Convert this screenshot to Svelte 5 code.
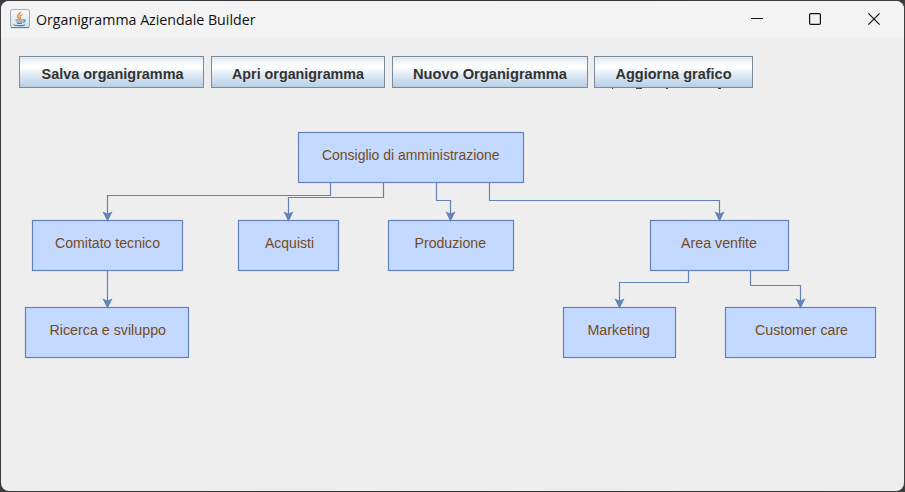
<script>
  const buttons = [
    { label: 'Salva organigramma', width: 185, text: 142, nudge: 1 },
    { label: 'Apri organigramma', width: 174, text: 132, nudge: 0 },
    { label: 'Nuovo Organigramma', width: 196, text: 154, nudge: 0 },
    { label: 'Aggiorna grafico', width: 159, text: 116, nudge: 0 }
  ];
  const nodes = [
    { label: 'Consiglio di amministrazione', x: 298, y: 132, w: 225, tx: 322, tw: 177.5 },
    { label: 'Comitato tecnico', x: 32, y: 220, w: 150, tx: 55, tw: 105 },
    { label: 'Acquisti', x: 238, y: 220, w: 100, tx: 265, tw: 49 },
    { label: 'Produzione', x: 388, y: 220, w: 125, tx: 414.5, tw: 71.5 },
    { label: 'Area venfite', x: 650, y: 220, w: 138, tx: 681, tw: 76 },
    { label: 'Ricerca e sviluppo', x: 25, y: 307, w: 163, tx: 49.5, tw: 116.5 },
    { label: 'Marketing', x: 563, y: 307, w: 112, tx: 587.5, tw: 62.5 },
    { label: 'Customer care', x: 725, y: 307, w: 150, tx: 755, tw: 93 }
  ];
  const edges = [
    { x1: 330, y1: 182, mid: 195, x2: 107, y2: 220 },
    { x1: 383, y1: 182, mid: 197, x2: 288, y2: 220 },
    { x1: 436, y1: 182, mid: 200, x2: 450, y2: 220 },
    { x1: 489, y1: 182, mid: 200, x2: 719, y2: 220 },
    { x1: 107, y1: 270, mid: 288, x2: 107, y2: 307 },
    { x1: 688, y1: 270, mid: 282, x2: 619, y2: 307 },
    { x1: 750, y1: 270, mid: 285, x2: 800, y2: 307 }
  ];
</script>

<div class="desktop">
  <div class="window">
    <header>
      <svg class="app-icon" width="20" height="20" viewBox="0 0 20 20">
        <defs>
          <linearGradient id="tile" x1="0" y1="0" x2="0" y2="1">
            <stop offset="0" stop-color="#fbfcfd" />
            <stop offset="1" stop-color="#d5e0ea" />
          </linearGradient>
        </defs>
        <rect x="0.6" y="0.6" width="18.8" height="18" rx="1.6" fill="url(#tile)" stroke="#9aa9b8" />
        <path d="M1 18.6H19" stroke="#5f7f9f" stroke-width="1" />
        <path d="M10.2 3C11 4.8 7.2 5.7 7.6 7.7C7.8 8.7 9 9.3 9.2 10" fill="none" stroke="#e2873f" stroke-width="1.5" />
        <path d="M12.4 5.5C10.2 6.5 9.5 7.3 10.3 8.3C10.9 9.1 10.5 9.7 9.9 10.2" fill="none" stroke="#e2873f" stroke-width="1.2" />
        <path d="M5.5 11H13M6.3 13H12.5M7 14.5H12M13 11C16 10.3 15.8 13 12.8 13.4" fill="none" stroke="#557ea5" stroke-width="1.1" />
        <path d="M4.2 15.4C3 16.8 13.5 17.2 15 15.6" fill="none" stroke="#557ea5" stroke-width="1.1" />
      </svg>
      <svg class="title" width="300" height="37">
        <text x="0" y="24" textLength="219.5" lengthAdjust="spacingAndGlyphs">Organigramma Aziendale Builder</text>
      </svg>
      <svg class="controls" width="132" height="14" viewBox="0 0 132 14">
        <path d="M1 6.5H13" />
        <rect x="59.6" y="1.6" width="10.8" height="10.8" rx="1.2" />
        <path d="M118.4 1.4L129.6 12.6M129.6 1.4L118.4 12.6" />
      </svg>
    </header>

    <div class="toolbar">
      {#each buttons as b}
        <button style:width="{b.width}px">
          <svg width={b.width - 2} height="30">
            <text
              x={(b.width - 2 - b.text) / 2 + b.nudge}
              y="22"
              textLength={b.text}
              lengthAdjust="spacingAndGlyphs">{b.label}</text>
          </svg>
        </button>
      {/each}
    </div>
  </div>

  <svg class="chart" width="905" height="492" viewBox="0 0 905 492">
    <path class="remnant" d="M612 88.5h1M636 88.5h6M666 88.5h2M718 88.5h3" />
    {#each nodes as n}
      <rect x={n.x + 0.5} y={n.y + 0.5} width={n.w} height="50" />
      <text x={n.tx} y={n.y + 28} textLength={n.tw} lengthAdjust="spacingAndGlyphs">{n.label}</text>
    {/each}
    {#each edges as e}
      <path class="edge" d="M{e.x1 + 0.5} {e.y1 + 1}V{e.mid + 0.5}H{e.x2 + 0.5}V{e.y2 - 5}" />
      <path class="arrow" d="M{e.x2 + 0.5} {e.y2 + 1.8}l-5 -10.2l5 1.8l5 -1.8z" />
    {/each}
  </svg>
</div>

<style>
  :global(body) {
    margin: 0;
    overflow: hidden;
  }
  .desktop {
    position: relative;
    width: 905px;
    height: 492px;
    box-sizing: border-box;
    padding: 1px;
    background: linear-gradient(90deg, #3c3a3d, #333 50%, #3c3c3c);
  }
  .window {
    height: 490px;
    border-radius: 8px;
    overflow: hidden;
    background: #eee;
  }
  header {
    display: flex;
    align-items: center;
    height: 37px;
    padding: 0 22px 0 9px;
    background: #f3f3f3;
  }
  .app-icon {
    margin-right: 6px;
    margin-top: -2px;
  }
  .title {
    font: 15px 'Open Sans', 'Noto Sans', sans-serif;
    fill: #111;
  }
  .controls {
    margin-left: auto;
    margin-top: -1px;
    fill: none;
    stroke: #111;
    stroke-width: 1.2;
  }
  .toolbar {
    display: flex;
    padding: 18px 18px 0;
  }
  button {
    display: flex;
    justify-content: center;
    height: 32px;
    box-sizing: border-box;
    margin: 0 7px 0 0;
    padding: 0;
    border: 1px solid #7a8a99;
    background: linear-gradient(#dde8f3, #fff 30%, #fff 34%, #dde8f3 62%, #b8cfe5);
    font: bold 15.5px 'Liberation Sans', Arial, sans-serif;
    fill: #333;
  }
  button:nth-child(3) {
    margin-right: 6px;
  }
  svg {
    overflow: visible;
  }
  .chart {
    position: absolute;
    left: 0;
    top: 0;
    font: 14px 'Liberation Sans', Arial, sans-serif;
  }
  .chart rect {
    fill: #c3d9ff;
    stroke: #6482b9;
    stroke-width: 1.2;
  }
  .chart text {
    fill: #744b1c;
  }
  .edge {
    fill: none;
    stroke: #6482b9;
    stroke-width: 1.2;
  }
  .arrow {
    fill: #6482b9;
  }
  .remnant {
    stroke: #444;
  }
</style>
